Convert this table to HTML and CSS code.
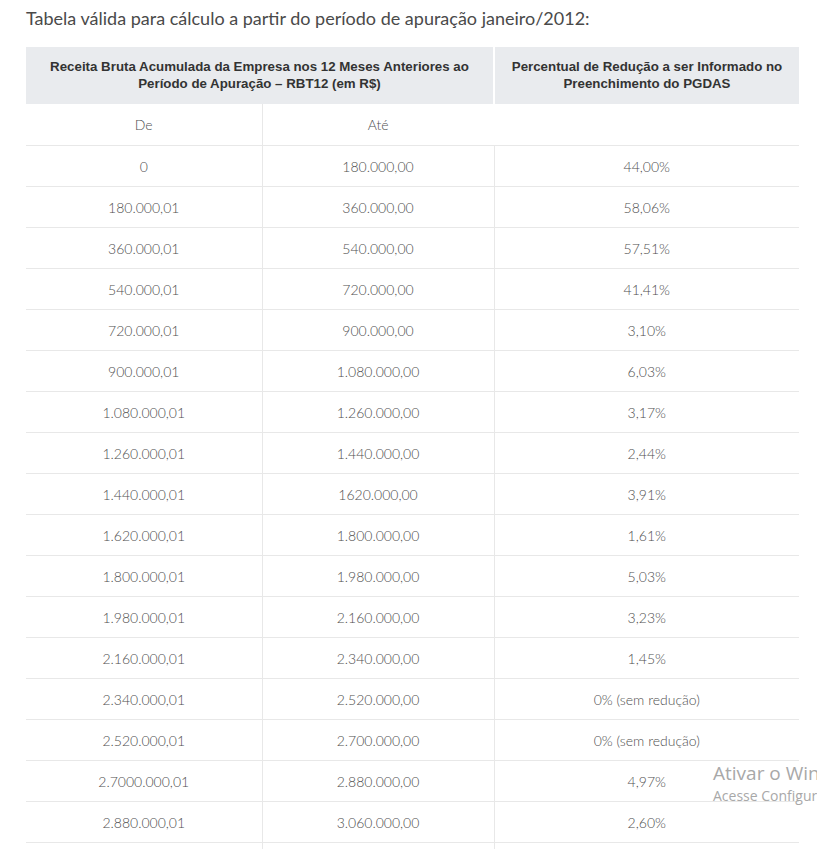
FILE: index.html
```html
<!DOCTYPE html>
<html lang="pt-BR">
<head>
<meta charset="utf-8">
<title>Tabela de redução</title>
<link rel="stylesheet" href="styles.css">
</head>
<body>
<div class="page">
  <p class="intro">Tabela válida para cálculo a partir do período de apuração janeiro/2012:</p>
  <table class="rtable">
    <colgroup>
      <col class="c1"><col class="c2"><col class="c3">
    </colgroup>
    <thead>
      <tr class="head">
        <th colspan="2">Receita Bruta Acumulada da Empresa nos 12 Meses Anteriores ao Período de Apuração – RBT12 (em R$)</th>
        <th class="sep">Percentual de Redução a ser Informado no Preenchimento do PGDAS</th>
      </tr>
    </thead>
    <tbody>
      <tr class="sub"><td>De</td><td class="vl">Até</td><td class="blank"></td></tr>
      <tr><td>0</td><td class="vl">180.000,00</td><td class="vl">44,00%</td></tr>
      <tr><td>180.000,01</td><td class="vl">360.000,00</td><td class="vl">58,06%</td></tr>
      <tr><td>360.000,01</td><td class="vl">540.000,00</td><td class="vl">57,51%</td></tr>
      <tr><td>540.000,01</td><td class="vl">720.000,00</td><td class="vl">41,41%</td></tr>
      <tr><td>720.000,01</td><td class="vl">900.000,00</td><td class="vl">3,10%</td></tr>
      <tr><td>900.000,01</td><td class="vl">1.080.000,00</td><td class="vl">6,03%</td></tr>
      <tr><td>1.080.000,01</td><td class="vl">1.260.000,00</td><td class="vl">3,17%</td></tr>
      <tr><td>1.260.000,01</td><td class="vl">1.440.000,00</td><td class="vl">2,44%</td></tr>
      <tr><td>1.440.000,01</td><td class="vl">1620.000,00</td><td class="vl">3,91%</td></tr>
      <tr><td>1.620.000,01</td><td class="vl">1.800.000,00</td><td class="vl">1,61%</td></tr>
      <tr><td>1.800.000,01</td><td class="vl">1.980.000,00</td><td class="vl">5,03%</td></tr>
      <tr><td>1.980.000,01</td><td class="vl">2.160.000,00</td><td class="vl">3,23%</td></tr>
      <tr><td>2.160.000,01</td><td class="vl">2.340.000,00</td><td class="vl">1,45%</td></tr>
      <tr><td>2.340.000,01</td><td class="vl">2.520.000,00</td><td class="vl">0% (sem redução)</td></tr>
      <tr><td>2.520.000,01</td><td class="vl">2.700.000,00</td><td class="vl">0% (sem redução)</td></tr>
      <tr><td>2.7000.000,01</td><td class="vl">2.880.000,00</td><td class="vl">4,97%</td></tr>
      <tr><td>2.880.000,01</td><td class="vl">3.060.000,00</td><td class="vl">2,60%</td></tr>
      <tr class="tail"><td></td><td class="vl"></td><td class="vl"></td></tr>
    </tbody>
  </table>
</div>
<div class="activate">
  <div class="act-title">Ativar o Windows</div>
  <div class="act-sub">Acesse Configurações para ativar o Windows.</div>
</div>
</body>
</html>
```

FILE: styles.css
```css
html, body {
  margin: 0;
  padding: 0;
  background: #ffffff;
  overflow: hidden;
}

.page {
  padding: 0 18px 0 26px;
  font-family: Lato, "Open Sans", sans-serif;
  color: #4f4f4f;
}

.intro {
  margin: 0;
  padding-top: 6px;
  height: 41px;
  font-size: 18px;
  line-height: 24px;
  color: #4a4a4a;
  font-weight: 400;
}

.rtable {
  width: 773px;
  border-collapse: collapse;
  table-layout: fixed;
}

.c1 { width: 236px; }
.c2 { width: 232px; }
.c3 { width: 305px; }

.head th {
  background: #e9ebee;
  font-family: "Liberation Sans", Arial, sans-serif;
  font-weight: 700;
  font-size: 13.3px;
  line-height: 17px;
  color: #333333;
  padding: 11px 10px 12px;
  text-align: center;
  vertical-align: middle;
}

.head th.sep {
  border-left: 2px solid #ffffff;
}

.rtable td {
  height: 40px;
  padding: 0;
  text-align: center;
  vertical-align: middle;
  font-size: 14px;
  font-weight: 300;
  color: #4f4f4f;
  border-bottom: 1px solid #e8e8e8;
}

.rtable .sub td {
  height: 41px;
}

.rtable .tail td {
  border-bottom: none;
}

.rtable td.vl {
  border-left: 1px solid #e8e8e8;
}

.rtable td.blank {
  border-left: none;
}

.activate {
  position: absolute;
  left: 713px;
  top: 762px;
  font-family: "Segoe UI", "Open Sans", "Noto Sans", sans-serif;
  color: #a8a8a8;
  white-space: nowrap;
}

.act-title {
  font-size: 19px;
  line-height: 22px;
}

.act-sub {
  font-size: 14px;
  line-height: 17px;
  margin-top: 3px;
}
```
